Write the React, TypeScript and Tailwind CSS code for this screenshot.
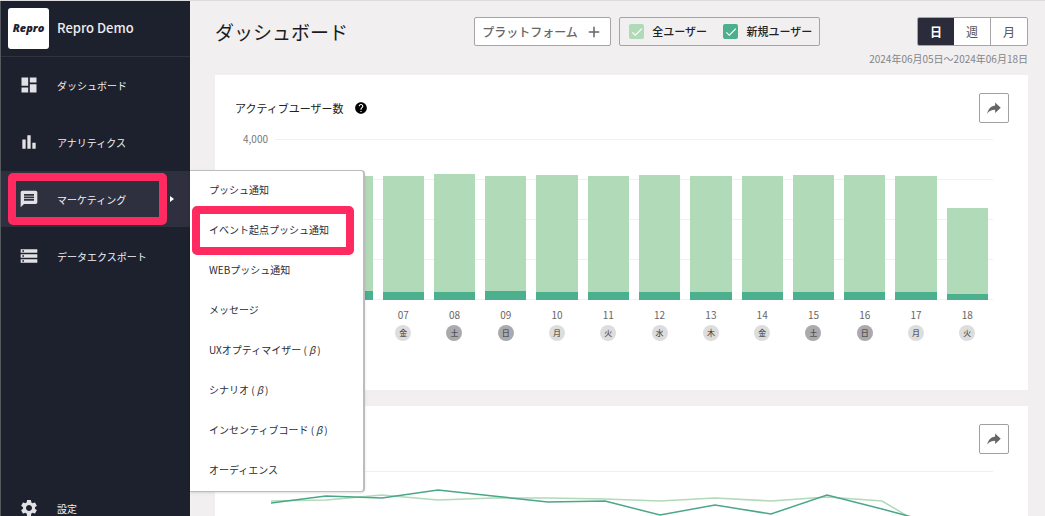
import { IoMdShareAlt } from 'react-icons/io';
import {
  MdAdd,
  MdBarChart,
  MdCheck,
  MdDashboard,
  MdHelp,
  MdMessage,
  MdSettings,
  MdStorage,
} from 'react-icons/md';
import type { IconType } from 'react-icons';
import type { ReactNode } from 'react';

const PLOT_MAX = 160;

const days = [
  { date: '05', day: '水', total: 124, fresh: 8 },
  { date: '06', day: '木', total: 123, fresh: 9 },
  { date: '07', day: '金', total: 123, fresh: 8 },
  { date: '08', day: '土', total: 125, fresh: 8 },
  { date: '09', day: '日', total: 123, fresh: 9 },
  { date: '10', day: '月', total: 124, fresh: 8 },
  { date: '11', day: '火', total: 123, fresh: 8 },
  { date: '12', day: '水', total: 124, fresh: 8 },
  { date: '13', day: '木', total: 123, fresh: 8 },
  { date: '14', day: '金', total: 123, fresh: 8 },
  { date: '15', day: '土', total: 124, fresh: 8 },
  { date: '16', day: '日', total: 124, fresh: 8 },
  { date: '17', day: '月', total: 123, fresh: 8 },
  { date: '18', day: '火', total: 91, fresh: 6 },
];

const beta = (
  <>
    (<i className="mx-0.5">β</i>)
  </>
);

const marketingMenu: ReactNode[] = [
  'プッシュ通知',
  'イベント起点プッシュ通知',
  'WEBプッシュ通知',
  'メッセージ',
  <>UXオプティマイザー {beta}</>,
  <>シナリオ {beta}</>,
  <>インセンティブコード {beta}</>,
  'オーディエンス',
];

function NavLink({ icon: Icon, label, active = false }: { icon: IconType; label: string; active?: boolean }) {
  return (
    <a
      href="#"
      className={`flex h-14 items-center pl-[18px] text-[10px] text-[#f0f0f2] ${active ? 'bg-[#2e303f]' : ''}`}
    >
      <Icon className="mr-[18px] size-5 text-[#e2e2e5]" />
      <span className="flex-1">{label}</span>
      {active && (
        <svg viewBox="0 0 4 6" className="mr-4 h-[6px] w-[4px] fill-white">
          <path d="M0 0l4 3-4 3z" />
        </svg>
      )}
    </a>
  );
}

function MarketingMenu() {
  return (
    <ul className="absolute -top-px left-full z-10 w-[175px] rounded-r border border-l-0 border-[#bdbdbf] border-r-2 bg-white shadow-sm">
      {marketingMenu.map((item, i) => (
        <li key={i} className="relative">
          <a
            href="#"
            className="flex h-10 items-center pb-1 pl-[19px] text-[10px] whitespace-nowrap text-[#2b2d38]"
          >
            <span>{item}</span>
          </a>
          {i === 1 && (
            <span className="pointer-events-none absolute -top-[5px] left-0.5 h-[49px] w-[162px] rounded-[5px] border-8 border-[#ff2a60]" />
          )}
        </li>
      ))}
    </ul>
  );
}

function Sidebar() {
  return (
    <aside className="flex w-[190px] shrink-0 flex-col border-l border-[#555a60] bg-[#1d212e]">
      <div className="flex h-14 shrink-0 items-center border-b border-[#30323f] pl-[7px]">
        <div className="grid size-[41px] place-items-center rounded-[3px] bg-white font-['Open_Sans',sans-serif] text-[11px] font-extrabold text-[#1d212e] italic">
          Repro
        </div>
        <span className="ml-2 pb-0.5 text-[13px] font-medium text-[#ececef]">Repro Demo</span>
      </div>
      <nav className="flex flex-1 flex-col">
        <ul className="flex flex-col gap-px">
          <li>
            <NavLink icon={MdDashboard} label="ダッシュボード" />
          </li>
          <li>
            <NavLink icon={MdBarChart} label="アナリティクス" />
          </li>
          <li className="relative">
            <NavLink icon={MdMessage} label="マーケティング" active />
            <span className="pointer-events-none absolute top-0.5 left-[7px] h-[52px] w-[159px] rounded-[5px] border-8 border-[#ff2a60]" />
            <MarketingMenu />
          </li>
          <li>
            <NavLink icon={MdStorage} label="データエクスポート" />
          </li>
        </ul>
        <div className="mt-auto -mb-5">
          <NavLink icon={MdSettings} label="設定" />
        </div>
      </nav>
    </aside>
  );
}

function SeriesToggle({ label, box }: { label: string; box: string }) {
  return (
    <label className="flex items-center gap-2 text-[11px] font-medium text-[#222]">
      <span className="grid size-[15px] place-items-center">
        <input
          type="checkbox"
          defaultChecked
          className={`peer col-start-1 row-start-1 size-[15px] appearance-none rounded-[2px] ${box}`}
        />
        <MdCheck className="pointer-events-none invisible col-start-1 row-start-1 size-[14px] text-white peer-checked:visible" />
      </span>
      {label}
    </label>
  );
}

function Header() {
  return (
    <header className="flex h-[74px] items-start pt-4">
      <h1 className="text-[19px] leading-[30px] text-[#1c1c1e]">ダッシュボード</h1>
      <div className="ml-auto flex gap-2">
        <button className="flex h-[29px] w-[137px] items-center justify-between rounded-[2px] border border-[#a5a5a7] bg-white pr-[7px] pl-[7px] text-xs font-medium text-[#666]">
          プラットフォーム
          <MdAdd className="size-[18px]" />
        </button>
        <div className="flex h-[29px] w-[201px] items-center justify-between rounded-[2px] border border-[#a5a5a7] pr-[7px] pl-[9px]">
          <SeriesToggle label="全ユーザー" box="bg-[#b0dab8]" />
          <SeriesToggle label="新規ユーザー" box="bg-[#4caf8e]" />
        </div>
      </div>
      <div className="ml-[49px] flex flex-col items-end">
        <div className="flex h-[29px] w-[111px] overflow-hidden rounded-[2px] border border-[#a5a5a7] bg-white text-xs text-[#555]">
          <button className="flex-1 bg-[#2b2c3b] font-bold text-white">日</button>
          <button className="flex-1">週</button>
          <button className="flex-1 border-l border-[#a5a5a7]">月</button>
        </div>
        <p className="mt-[5px] text-[10px] leading-4 text-[#858587]">2024年06月05日〜2024年06月18日</p>
      </div>
    </header>
  );
}

function ShareButton() {
  return (
    <button
      aria-label="共有"
      className="ml-auto grid size-[30px] place-items-center rounded-[2px] border border-[#a0a0a2] bg-white text-[#666]"
    >
      <IoMdShareAlt className="size-[18px]" />
    </button>
  );
}

function BarChart() {
  return (
    <div className="mt-4 mr-[35px] ml-[60px]">
      <div className="relative h-[161px]">
        <span className="absolute -top-2 right-full mr-[7px] text-[10px] leading-4 text-[#777]">4,000</span>
        <div className="absolute inset-0 flex flex-col justify-between">
          {[4, 3, 2, 1, 0].map((n) => (
            <div key={n} className="h-px bg-[#f0f0f0]" />
          ))}
        </div>
        <div className="relative flex h-full items-end">
          {days.map((d) => (
            <div
              key={d.date}
              className="mx-[5px] flex flex-1 flex-col justify-end bg-[#b0dab8]"
              style={{ height: `${(d.total / PLOT_MAX) * 100}%` }}
            >
              <div className="bg-[#4caf8e]" style={{ height: `${(d.fresh / d.total) * 100}%` }} />
            </div>
          ))}
        </div>
      </div>
      <div className="mt-[7px] flex">
        {days.map((d) => (
          <div key={d.date} className="flex flex-1 flex-col items-center text-[#666]">
            <span className="text-[10px] leading-4">{d.date}</span>
            <span
              className={`mt-0.5 grid size-4 place-items-center rounded-full text-[8px] leading-none text-[#333] ${
                d.day === '土' || d.day === '日' ? 'bg-[#aaaaae]' : 'bg-[#dddddd]'
              }`}
            >
              {d.day}
            </span>
          </div>
        ))}
      </div>
    </div>
  );
}

function LineChart() {
  return (
    <div className="mt-[17px] mr-[35px] ml-14 border-t border-[#f0f0f0]">
      <svg viewBox="0 0 722 160" preserveAspectRatio="none" className="h-40 w-full fill-none" strokeWidth="1.5">
        <polyline
          stroke="#b0dab8"
          vectorEffect="non-scaling-stroke"
          points="0,29 55,28 111,23 167,28 222,26 277,26 334,27 389,29 444,26 500,29 556,25 611,29 667,62 722,95"
        />
        <polyline
          stroke="#4ba68a"
          vectorEffect="non-scaling-stroke"
          points="0,31 55,24 111,26 167,18 222,24 277,30 334,29 389,43 444,33 500,42 556,23 611,37 667,52 722,79"
        />
      </svg>
    </div>
  );
}

export default function App() {
  return (
    <div className="flex h-screen overflow-hidden border-t border-[#dcdcde] bg-[#f1eff0] font-['Noto_Sans_CJK_JP',sans-serif]">
      <Sidebar />
      <main className="min-w-0 flex-1 pr-[17px] pl-[25px]">
        <Header />
        <div className="flex flex-col gap-4">
          <section className="h-[315px] bg-white">
            <div className="flex items-center pt-[18px] pr-[19px] pl-5">
              <h2 className="text-[11px] text-[#222]">アクティブユーザー数</h2>
              <MdHelp className="ml-2.5 size-[14px] text-black" />
              <ShareButton />
            </div>
            <BarChart />
          </section>
          <section className="bg-white">
            <div className="flex pt-[18px] pr-[19px]">
              <ShareButton />
            </div>
            <LineChart />
          </section>
        </div>
      </main>
    </div>
  );
}
